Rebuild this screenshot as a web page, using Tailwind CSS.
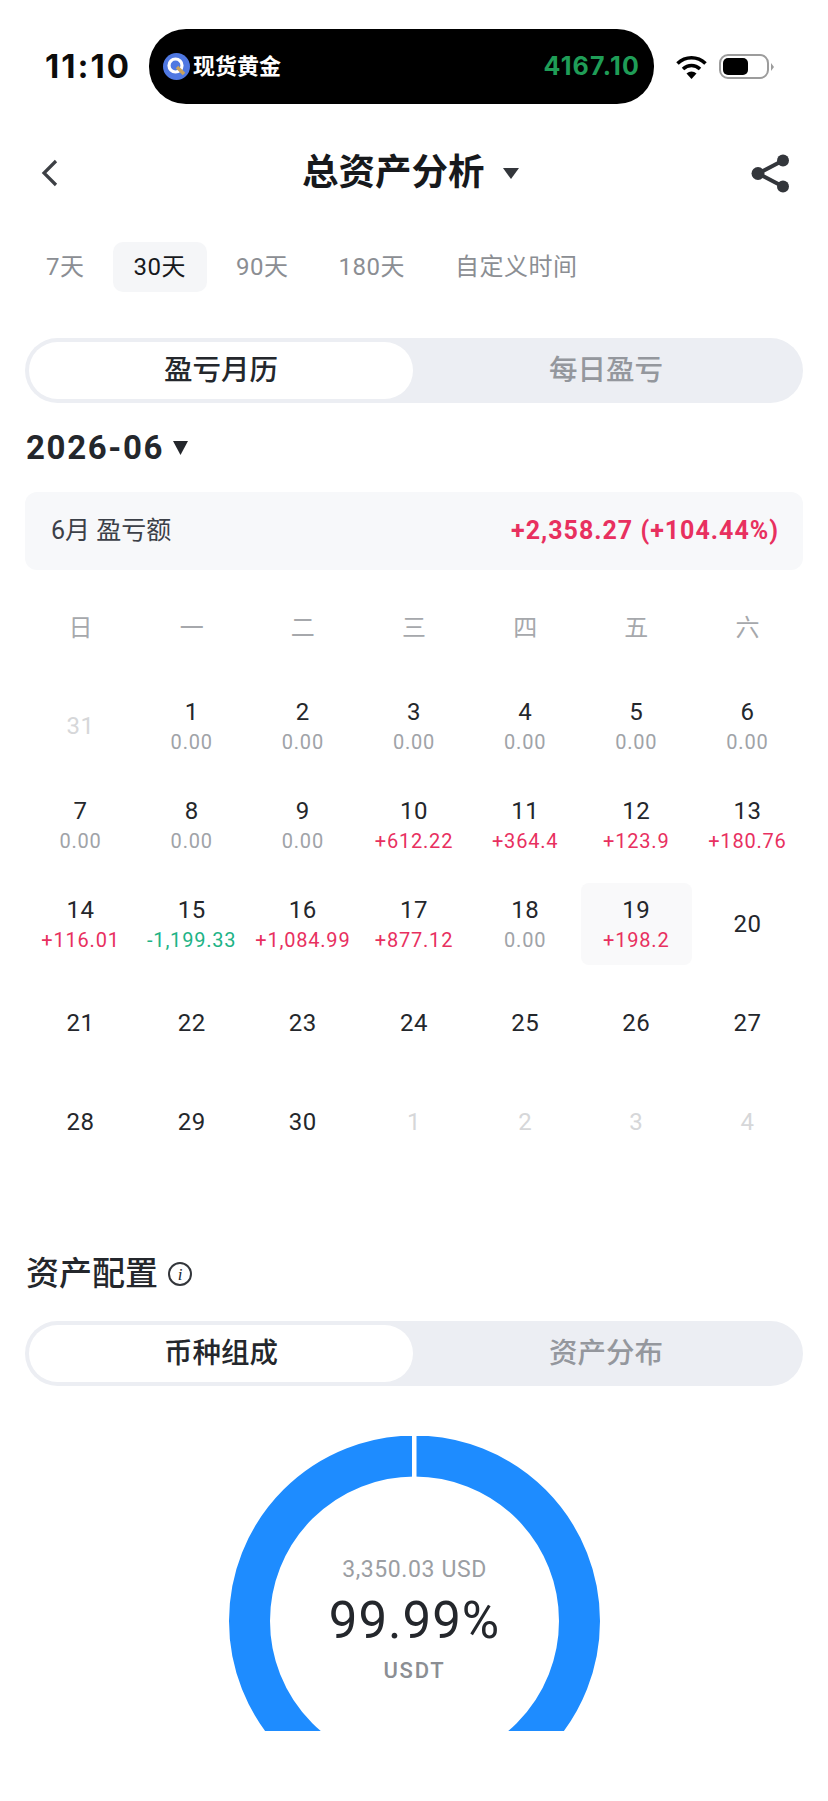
<!DOCTYPE html>
<html lang="zh-CN">
<head>
  <meta charset="UTF-8">
  <meta name="viewport" content="width=device-width, initial-scale=1.0">
  <title>总资产分析</title>
  <script src="https://cdn.jsdelivr.net/npm/@tailwindcss/browser@4"></script>
</head>
<body class="bg-white w-[828px] h-[1801px] overflow-hidden font-['Roboto','Noto_Sans_CJK_SC',sans-serif] text-[#24272c]">

  <!-- Status bar -->
  <div class="flex items-center pt-[29px] pl-[45px]">
    <div class="w-[104px] text-[33px] font-bold font-['Inter','Noto_Sans_CJK_SC',sans-serif] text-[#0c0c0c] tracking-[2px]">11:10</div>
    <div class="w-[505px] h-[75px] rounded-[37px] bg-black flex items-center pl-[14px] pr-[14px]">
      <svg class="w-[27px] h-[27px]" viewBox="0 0 27 27">
        <circle cx="13.5" cy="13.5" r="13.5" fill="#4f78e2"/>
        <circle cx="12.5" cy="12.5" r="6.5" fill="none" stroke="#fff" stroke-width="3.2"/>
        <path d="M14 14l7 7" stroke="#c9a25a" stroke-width="3.5"/>
      </svg>
      <span class="ml-[3px] text-[22px] font-bold text-white leading-none">现货黄金</span>
      <span class="ml-auto text-[25px] font-bold font-['Inter',sans-serif] text-[#1f9d57] tracking-[1.2px]">4167.10</span>
    </div>
    <svg class="ml-[22px] w-[31px] h-[24px]" viewBox="0 0 31 24">
      <path d="M1.5 8.5C9.5 .8 21.5 .8 29.5 8.5" fill="none" stroke="#000" stroke-width="3.6"/>
      <path d="M7 14c5-4.6 12-4.6 17 0" fill="none" stroke="#000" stroke-width="3.6"/>
      <path d="M10.5 18.5c3-2.7 7-2.7 10 0l-5 5.5z" fill="#000"/>
    </svg>
    <div class="ml-[12px] w-[50px] h-[25px] rounded-[9px] border-2 border-[#9c9c9c] p-[2px]">
      <div class="w-[25px] h-[17px] rounded-[5px] bg-black"></div>
    </div>
    <div class="ml-[2px] w-0 h-0 border-y-[4px] border-y-transparent border-l-[3px] border-l-[#9c9c9c]"></div>
  </div>

  <!-- Nav -->
  <div class="mt-[39px] h-[60px] flex items-center pl-[41px] pr-[39px]">
    <svg class="w-[17px] h-[28px]" viewBox="0 0 17 28">
      <path d="M15 2L3 14l12 12" fill="none" stroke="#3d4045" stroke-width="3.2"/>
    </svg>
    <div class="ml-[244px] text-[36.5px] font-bold leading-none text-[#17191c]">总资产分析</div>
    <svg class="ml-[18px] w-[16px] h-[11px]" viewBox="0 0 16 11"><path d="M0 0h16L8 11z" fill="#33363b"/></svg>
    <svg class="ml-auto w-[38px] h-[39px]" viewBox="0 0 38 39">
      <path d="M32 6.5L7 19.5l25 13" fill="none" stroke="#33363b" stroke-width="4"/>
      <circle cx="32" cy="6.5" r="6" fill="#33363b"/>
      <circle cx="7" cy="19.5" r="6.5" fill="#33363b"/>
      <circle cx="32" cy="32.5" r="6" fill="#33363b"/>
    </svg>
  </div>

  <!-- Range tabs -->
  <div class="mt-[39px] pl-[25px] flex gap-2 text-[24px] tracking-[0.5px] text-[#8b8e93]">
    <div class="h-[50px] pl-[21px] pr-[20px] flex items-center">7天</div>
    <div class="h-[50px] px-[21px] flex items-center rounded-[10px] bg-[#f5f6f8] text-[#17191c]">30天</div>
    <div class="h-[50px] px-[21px] flex items-center">90天</div>
    <div class="h-[50px] px-[21px] flex items-center">180天</div>
    <div class="h-[50px] px-[21px] flex items-center">自定义时间</div>
  </div>

  <!-- Segment -->
  <div class="mt-[46px] mx-[25px] h-[65px] p-[4px] flex rounded-full bg-[#eceef3] text-[28.5px]">
    <div class="w-[384px] pt-[2px] flex items-center justify-center rounded-full bg-white font-medium text-[#24272c]">盈亏月历</div>
    <div class="flex-1 pt-[2px] flex items-center justify-center font-medium text-[#94979d]">每日盈亏</div>
  </div>

  <!-- Month picker -->
  <div class="mt-[23px] h-[44px] pl-[26px] flex items-center">
    <span class="text-[33px] font-bold tracking-[1.65px] text-[#24272c]">2026-06</span>
    <svg class="ml-[9px] w-[15px] h-[14px]" viewBox="0 0 15 14"><path d="M0 0h15L7.5 14z" fill="#24272c"/></svg>
  </div>

  <!-- Month summary -->
  <div class="mt-[22px] mx-[25px] h-[78px] pl-[26px] pr-[24px] flex items-center justify-between rounded-[12px] bg-[#f7f8fa]">
    <span class="text-[25px] text-[#3c4048]">6月 盈亏额</span>
    <span class="text-[25px] font-bold text-[#e8305f] tracking-[1px]">+2,358.27 (+104.44%)</span>
  </div>

  <!-- Weekdays -->
  <div class="mt-[38px] mx-[25px] h-[40px] grid grid-cols-7 text-center text-[24px] leading-[40px] text-[#a6a8ac]">
    <div>日</div><div>一</div><div>二</div><div>三</div><div>四</div><div>五</div><div>六</div>
  </div>

  <!-- Calendar -->
  <div class="mt-[37px] mx-[25px] grid grid-cols-7 auto-rows-[82px] gap-y-[17px] text-center text-[24px] tracking-[0.5px] leading-[30px]">
    <div class="flex items-center justify-center text-[#d6d7d9]">31</div>
    <div class="flex flex-col justify-center">1<span class="mt-[2px] text-[20px] leading-[26px] tracking-[0.8px] text-[#a0a3a8]">0.00</span></div>
    <div class="flex flex-col justify-center">2<span class="mt-[2px] text-[20px] leading-[26px] tracking-[0.8px] text-[#a0a3a8]">0.00</span></div>
    <div class="flex flex-col justify-center">3<span class="mt-[2px] text-[20px] leading-[26px] tracking-[0.8px] text-[#a0a3a8]">0.00</span></div>
    <div class="flex flex-col justify-center">4<span class="mt-[2px] text-[20px] leading-[26px] tracking-[0.8px] text-[#a0a3a8]">0.00</span></div>
    <div class="flex flex-col justify-center">5<span class="mt-[2px] text-[20px] leading-[26px] tracking-[0.8px] text-[#a0a3a8]">0.00</span></div>
    <div class="flex flex-col justify-center">6<span class="mt-[2px] text-[20px] leading-[26px] tracking-[0.8px] text-[#a0a3a8]">0.00</span></div>

    <div class="flex flex-col justify-center">7<span class="mt-[2px] text-[20px] leading-[26px] tracking-[0.8px] text-[#a0a3a8]">0.00</span></div>
    <div class="flex flex-col justify-center">8<span class="mt-[2px] text-[20px] leading-[26px] tracking-[0.8px] text-[#a0a3a8]">0.00</span></div>
    <div class="flex flex-col justify-center">9<span class="mt-[2px] text-[20px] leading-[26px] tracking-[0.8px] text-[#a0a3a8]">0.00</span></div>
    <div class="flex flex-col justify-center">10<span class="mt-[2px] text-[20px] leading-[26px] tracking-[0.8px] text-[#e8305f]">+612.22</span></div>
    <div class="flex flex-col justify-center">11<span class="mt-[2px] text-[20px] leading-[26px] tracking-[0.8px] text-[#e8305f]">+364.4</span></div>
    <div class="flex flex-col justify-center">12<span class="mt-[2px] text-[20px] leading-[26px] tracking-[0.8px] text-[#e8305f]">+123.9</span></div>
    <div class="flex flex-col justify-center">13<span class="mt-[2px] text-[20px] leading-[26px] tracking-[0.8px] text-[#e8305f]">+180.76</span></div>

    <div class="flex flex-col justify-center">14<span class="mt-[2px] text-[20px] leading-[26px] tracking-[0.8px] text-[#e8305f]">+116.01</span></div>
    <div class="flex flex-col justify-center">15<span class="mt-[2px] text-[20px] leading-[26px] tracking-[0.8px] text-[#1db386]">-1,199.33</span></div>
    <div class="flex flex-col justify-center">16<span class="mt-[2px] text-[20px] leading-[26px] tracking-[0.8px] text-[#e8305f]">+1,084.99</span></div>
    <div class="flex flex-col justify-center">17<span class="mt-[2px] text-[20px] leading-[26px] tracking-[0.8px] text-[#e8305f]">+877.12</span></div>
    <div class="flex flex-col justify-center">18<span class="mt-[2px] text-[20px] leading-[26px] tracking-[0.8px] text-[#a0a3a8]">0.00</span></div>
    <div class="flex flex-col justify-center rounded-[8px] bg-[#f9f9fa]">19<span class="mt-[2px] text-[20px] leading-[26px] tracking-[0.8px] text-[#e8305f]">+198.2</span></div>
    <div class="flex items-center justify-center">20</div>

    <div class="flex items-center justify-center">21</div>
    <div class="flex items-center justify-center">22</div>
    <div class="flex items-center justify-center">23</div>
    <div class="flex items-center justify-center">24</div>
    <div class="flex items-center justify-center">25</div>
    <div class="flex items-center justify-center">26</div>
    <div class="flex items-center justify-center">27</div>

    <div class="flex items-center justify-center">28</div>
    <div class="flex items-center justify-center">29</div>
    <div class="flex items-center justify-center">30</div>
    <div class="flex items-center justify-center text-[#d6d7d9]">1</div>
    <div class="flex items-center justify-center text-[#d6d7d9]">2</div>
    <div class="flex items-center justify-center text-[#d6d7d9]">3</div>
    <div class="flex items-center justify-center text-[#d6d7d9]">4</div>
  </div>

  <!-- Asset allocation -->
  <div class="mt-[89px] h-[44px] pl-[26px] flex items-center">
    <span class="text-[33px] font-medium text-[#24272c]">资产配置</span>
    <span class="ml-[10px] w-[24px] h-[24px] rounded-full border-2 border-[#33363b] flex items-center justify-center italic text-[17px] leading-none font-['Liberation_Serif',serif]">i</span>
  </div>

  <div class="mt-[25px] mx-[25px] h-[65px] p-[4px] flex rounded-full bg-[#eceef3] text-[28.5px]">
    <div class="w-[384px] pt-[2px] flex items-center justify-center rounded-full bg-white font-medium text-[#24272c]">币种组成</div>
    <div class="flex-1 pt-[2px] flex items-center justify-center font-medium text-[#94979d]">资产分布</div>
  </div>

  <!-- Donut, cut off at the bottom as in the app -->
  <div class="relative mt-[50px] ml-[229px] w-[371px] h-[295px] overflow-hidden">
    <svg class="w-[371px] h-[371px]" viewBox="0 0 371 371">
      <circle cx="185.5" cy="185" r="165" fill="none" stroke="#1e8cff" stroke-width="41"/>
      <rect x="183" y="0" width="4.5" height="42" fill="#fff"/>
    </svg>
    <div class="absolute left-0 right-0 top-[119px] text-center">
      <div class="h-[30px] text-[23px] leading-[30px] tracking-[0.6px] text-[#9b9ea3]">3,350.03 USD</div>
      <div class="mt-[6px] h-[60px] text-[51px] leading-[60px] font-[450] tracking-[1px] text-[#24272c]">99.99%</div>
      <div class="mt-[5px] h-[30px] text-[22px] leading-[30px] font-medium tracking-[1.8px] text-[#8b8e93]">USDT</div>
    </div>
  </div>
</body>
</html>
